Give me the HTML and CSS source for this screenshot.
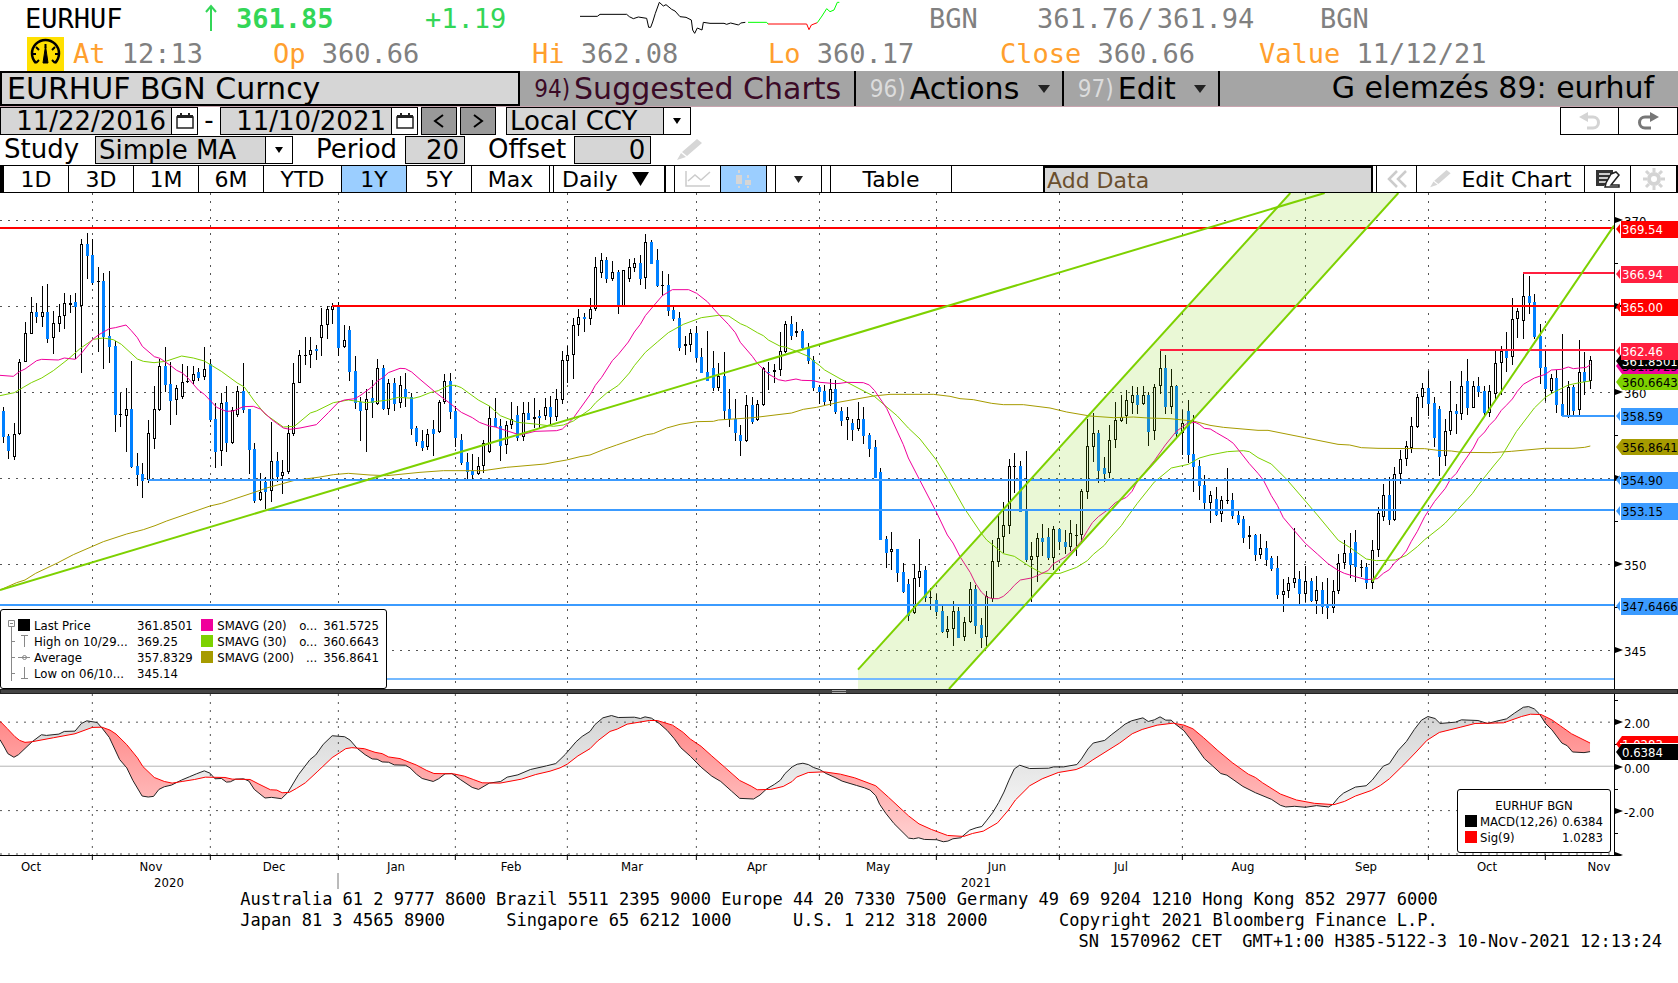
FILE: index.html
```html
<!DOCTYPE html>
<html lang="en">
<head>
  <meta charset="UTF-8" />
  <meta name="viewport" content="width=device-width, initial-scale=1.0"/>
  <title>EURHUF BGN Curncy</title>
  <link rel="stylesheet" href="styles.css">
</head>
<body>

  <!-- Quote lines -->
  <header class="quote">
    <div class="quote-row quote-top">
      <span class="ticker">EURHUF</span>
      <span class="up">
        <svg width="12" height="28" viewBox="0 0 12 28"><path d="M6 27V2M1 8l5-6 5 6" fill="none" stroke="#33d657" stroke-width="2"/></svg>
      </span>
      <span class="up last">361.85</span>
      <span class="up">+1.19</span>
      <span class="spark">
        <svg width="262" height="36" viewBox="0 0 786 108" fill="none" stroke-width="3">
          <path stroke="#000" d="M0 49H52L60 43H140L148 50L160 56L175 51L200 55L206 82H212L218 66L226 40L238 7L250 18L258 14L275 28L285 33L300 50L318 52L334 60L338 90L344 100L352 84L366 90L370 67L390 70H432L440 73L452 69L476 75L482 69L496 67"/>
          <path stroke="#0f0" d="M504 67H560L564 72"/>
          <path stroke="#f00" d="M564 72H680L687 89L694 75L712 68"/>
          <path stroke="#0f0" d="M712 68L726 48L740 26L750 35L762 30L772 7H778"/>
        </svg>
      </span>
      <span>BGN</span>
      <span>361.76<i class="slash">/</i>361.94</span>
      <span>BGN</span>
    </div>
    <div class="quote-row quote-bottom">
      <span class="gauge">
        <svg width="37" height="34" viewBox="0 0 37 34">
          <path d="M9 26A13.500 13.500 0 1 1 28 26" fill="none" stroke="#000" stroke-width="2.500"/>
          <path d="M18.500 7v4M5 17h4M28 17h4M9 10l3 3M28 10l-3 3M9 26l3-3M28 26l-3-3" stroke="#000" stroke-width="2" />
          <path d="M18.500 9l2.500 17h-5z" fill="#000" stroke="#000"/>
        </svg>
      </span>
      <span><b>At</b> 12:13</span>
      <span><b>Op</b> 360.66</span>
      <span><b>Hi</b> 362.08</span>
      <span><b>Lo</b> 360.17</span>
      <span><b>Close</b> 360.66</span>
      <span><b>Value</b> 11/12/21</span>
    </div>
  </header>

  <!-- Security / menu bar -->
  <nav class="menu-bar">
    <input type="text" class="security" aria-label="Security" value="EURHUF BGN Curncy" />
    <button class="menu-item suggested"><span class="num">94)</span>Suggested Charts</button>
    <button class="menu-item actions"><span class="num">96)</span>Actions <svg class="arrow" width="12" height="8" viewBox="0 0 12 8"><path d="M0 0h12L6 8z"/></svg></button>
    <button class="menu-item edit"><span class="num">97)</span>Edit <svg class="arrow" width="12" height="8" viewBox="0 0 12 8"><path d="M0 0h12L6 8z"/></svg></button>
    <h1>G elemzés 89: eurhuf</h1>
  </nav>

  <!-- Date range -->
  <div class="form-row">
    <input type="text" class="date" aria-label="Start date" value="11/22/2016" />
    <button class="calendar" aria-label="Pick start date"><svg width="18" height="18" viewBox="0 0 18 18"><path d="M1 5h16v11H1z" fill="none" stroke="#222" stroke-width="1.500"/><path d="M1 3h16v3H1zM4 1h2v3H4zM12 1h2v3h-2z" fill="#222"/></svg></button>
    <span class="dash">-</span>
    <input type="text" class="date" aria-label="End date" value="11/10/2021" />
    <button class="calendar" aria-label="Pick end date"><svg width="18" height="18" viewBox="0 0 18 18"><path d="M1 5h16v11H1z" fill="none" stroke="#222" stroke-width="1.500"/><path d="M1 3h16v3H1zM4 1h2v3H4zM12 1h2v3h-2z" fill="#222"/></svg></button>
    <button class="step" aria-label="Previous"><svg width="12" height="14" viewBox="0 0 12 14"><path d="M10 1L2 7l8 6" fill="none" stroke="#000" stroke-width="2"/></svg></button>
    <button class="step" aria-label="Next"><svg width="12" height="14" viewBox="0 0 12 14"><path d="M2 1l8 6-8 6" fill="none" stroke="#000" stroke-width="2"/></svg></button>
    <span class="drop currency">
      <select aria-label="Currency"><option>Local CCY</option></select>
      <span class="drop-arrow"><svg width="8" height="6" viewBox="0 0 8 6"><path d="M0 0h8L4 6z"/></svg></span>
    </span>
    <span class="history">
      <button aria-label="Undo"><svg width="24" height="20" viewBox="0 0 24 20"><path d="M8 6h7a5 5 0 0 1 0 11H9" fill="none" stroke="#d4d4d4" stroke-width="3"/><path d="M1 6l9-5v10z" fill="#d4d4d4"/></svg></button>
      <button aria-label="Redo"><svg width="24" height="20" viewBox="0 0 24 20"><path d="M16 6H9a5 5 0 0 0 0 11h6" fill="none" stroke="#777" stroke-width="3"/><path d="M23 6l-9-5v10z" fill="#777"/></svg></button>
    </span>
  </div>

  <!-- Study settings -->
  <div class="form-row">
    <label for="study" class="study-label">Study</label>
    <span class="drop study">
      <select id="study"><option>Simple MA</option></select>
      <span class="drop-arrow"><svg width="8" height="6" viewBox="0 0 8 6"><path d="M0 0h8L4 6z"/></svg></span>
    </span>
    <label for="period" class="field-label">Period</label>
    <input type="text" id="period" class="number period" value="20" />
    <label for="offset" class="field-label">Offset</label>
    <input type="text" id="offset" class="number offset" value="0" />
    <svg class="pencil" width="26" height="22" viewBox="0 0 26 22"><path d="M21 0l5 4-15 13-5-4zM5 14l5 4-9 3z" fill="#d6d6d6"/></svg>
  </div>

  <!-- Chart toolbar -->
  <div class="toolbar">
    <button>1D</button>
    <button>3D</button>
    <button>1M</button>
    <button>6M</button>
    <button class="wide">YTD</button>
    <button class="active">1Y</button>
    <button>5Y</button>
    <button class="wide">Max</button>
    <span class="gap narrow"></span>
    <span class="daily">
      <select aria-label="Periodicity"><option>Daily</option></select>
      <svg width="17" height="14" viewBox="0 0 17 14"><path d="M0 0h17L8.500 14z"/></svg>
    </span>
    <span class="gap"></span>
    <button class="icon" aria-label="Line chart"><svg width="26" height="18" viewBox="0 0 26 18" fill="none" stroke="#ccc" stroke-width="1.500"><path d="M1 1v15h24M3 11l7-6 6 5 9-8"/></svg></button>
    <button class="icon active" aria-label="Candle chart"><svg width="18" height="20" viewBox="0 0 18 20" fill="#d6d6d6"><path d="M3 1h2v3H3zM1 6h6v9H1zM3 17h2v2H3zM12 6h2v3h-2zM10 11h6v5h-6zM12 17h2v2h-2z"/></svg></button>
    <span class="gap"></span>
    <button class="icon" aria-label="More chart types"><svg width="9" height="7" viewBox="0 0 9 7"><path d="M0 0h9L4.500 7z" fill="#222"/></svg></button>
    <span class="gap"></span>
    <button class="table-btn">Table</button>
    <span class="blank"></span>
    <input type="text" class="add-data" aria-label="Add data" placeholder="Add Data" />
    <span class="gap narrow"></span>
    <button class="collapse" aria-label="Collapse"><svg width="20" height="18" viewBox="0 0 20 18" fill="none" stroke="#ccc" stroke-width="2.500"><path d="M10 1L2 9l8 8M19 1l-8 8 8 8"/></svg></button>
    <button class="edit-chart"><svg width="22" height="18" viewBox="0 0 26 22"><path d="M21 0l5 4-15 13-5-4zM5 14l5 4-9 3z" fill="#d6d6d6"/></svg>Edit Chart</button>
    <button class="icon" aria-label="Annotate"><svg width="24" height="18" viewBox="0 0 24 18"><path d="M0 0h17v4l-3 6-6 6H0z" fill="#333"/><path d="M3 4h11M3 8h9M3 12h7" stroke="#fff" stroke-width="1.500"/><path d="M15 4l5-2 3 3-8 10h8v2H9l1-4z" fill="#fff" stroke="#222" stroke-width="1.500"/></svg></button>
    <button class="icon" aria-label="Settings"><svg width="22" height="22" viewBox="0 0 22 22" fill="none" stroke="#d4d4d4"><circle cx="11" cy="11" r="5" stroke-width="4"/><path d="M11 0v4M11 18v4M0 11h4M18 11h4M3 3l3 3M16 16l3 3M3 19l3-3M16 6l3-3" stroke-width="3"/></svg></button>
  </div>

  <!-- Charts -->
  <main class="charts">
    <div class="pane">
      <svg id="price" class="price-plot" viewBox="0 9 4842 1488" preserveAspectRatio="none"></svg>
      <div class="legend price-legend">
        <svg class="tree" width="26" height="64" viewBox="0 0 26 64" fill="none" stroke="#888">
          <path d="M.500 2.500h6v6h-6zM2 5.500h3M3.500 9v54M4 23.500h3M4 39.500h3M10 39.500h12M4 55.500h3M13 17.500h7M16.500 18v11M13 60.500h7M16.500 49v11"/>
          <circle cx="16.500" cy="39.500" r="2"/>
          <path d="M10 1h12v12H10z" fill="#000" stroke="none"/>
        </svg>
        <table>
          <tr><td>Last Price</td><td>361.8501</td></tr>
          <tr><td>High on 10/29...</td><td>369.25</td></tr>
          <tr><td>Average</td><td>357.8329</td></tr>
          <tr><td>Low on 06/10...</td><td>345.14</td></tr>
        </table>
        <table class="averages">
          <tr><td><i class="swatch magenta"></i></td><td>SMAVG (20)</td><td class="more">o...</td><td>361.5725</td></tr>
          <tr><td><i class="swatch green"></i></td><td>SMAVG (30)</td><td class="more">o...</td><td>360.6643</td></tr>
          <tr><td><i class="swatch olive"></i></td><td>SMAVG (200)</td><td class="more">...</td><td>356.8641</td></tr>
        </table>
      </div>
    </div>
    <svg id="priceAxis" class="axis price-axis"></svg>

    <div class="splitter"><span class="grip"></span></div>

    <div class="pane">
      <svg id="macd" class="macd-plot" viewBox="0 42 4519 486" preserveAspectRatio="none"></svg>
      <div class="legend macd-legend">
        <table>
          <caption>EURHUF BGN</caption>
          <tr><td><i class="swatch black"></i></td><td>MACD(12,26)</td><td>0.6384</td></tr>
          <tr><td><i class="swatch red"></i></td><td>Sig(9)</td><td>1.0283</td></tr>
        </table>
      </div>
    </div>
    <svg id="macdAxis" class="axis macd-axis"></svg>
  </main>
  <svg id="months" class="months"></svg>

  <footer>
    <div class="phones">
      <pre>Australia 61 2 9777 8600 Brazil 5511 2395 9000 Europe 44 20 7330 7500 Germany 49 69 9204 1210 Hong Kong 852 2977 6000</pre>
      <pre>Japan 81 3 4565 8900      Singapore 65 6212 1000      U.S. 1 212 318 2000       Copyright 2021 Bloomberg Finance L.P.</pre>
    </div>
    <pre class="serial">SN 1570962 CET  GMT+1:00 H385-5122-3 10-Nov-2021 12:13:24</pre>
  </footer>

  <script src="chart.js"></script>
</body>
</html>
```

FILE: styles.css
```css
* {
  box-sizing: border-box;
}

body {
  margin: 0;
  background: #fff;
  color: #000;
  font-family: "DejaVu Sans", sans-serif;
  font-size: 26px;
}

button, input, select {
  font: inherit;
  color: inherit;
  margin: 0;
  padding: 0;
  border: 1px solid #000;
  border-radius: 0;
  background: #fff;
}

button {
  display: flex;
  align-items: center;
  justify-content: center;
  white-space: nowrap;
  cursor: pointer;
}

select {
  appearance: none;
}

svg {
  display: block;
  flex: none;
}

/* quote lines */
.quote {
  font-family: "DejaVu Sans Mono", monospace;
  font-size: 27px;
  color: #808080;
}

.quote-row {
  display: grid;
  align-items: center;
  white-space: nowrap;
  height: 36px;
}

.quote-top {
  grid-template-columns: 180fr 31fr 189fr 155fr 349fr 108fr 283fr 358fr;
  padding-left: 25px;
}

.quote-bottom {
  grid-template-columns: 46fr 200fr 259fr 236fr 232fr 259fr 419fr;
  padding-left: 27px;
  height: 35px;
}

.ticker {
  color: #000;
}

.up {
  color: #33d657;
}

.last {
  font-weight: bold;
}

.slash {
  padding: 0 3px;
  font-style: normal;
}

.quote-bottom b {
  color: #ff9f2e;
  font-weight: normal;
}

.gauge svg {
  background: #ffe000;
}

/* menu bar */
.menu-bar {
  display: flex;
  height: 36px;
  background: #a5a5a5;
  border-bottom: 1px solid #c9a5b0;
  font-size: 30px;
}

.security {
  width: 31%;
  padding-left: 5px;
  background: #d6d6d6;
  border-width: 2px;
}

.menu-item {
  justify-content: flex-start;
  padding: 0 12px 0 14px;
  background: none;
  border-width: 0 2px 0 0;
}

.suggested {
  width: 20%;
  color: #3b0a26;
}

.actions {
  width: 208px;
}

.edit {
  width: 156px;
}

.num {
  font-family: "Liberation Sans Narrow", "DejaVu Sans Condensed", sans-serif;
  font-size: 24px;
  color: #dcdcdc;
  padding-right: 4px;
}

.suggested .num {
  color: inherit;
}

.menu-item .arrow {
  margin-left: auto;
  fill: #222;
}

.menu-bar h1 {
  flex: 1;
  margin: 0;
  padding-right: 24px;
  text-align: right;
  font-size: 30px;
  font-weight: normal;
  line-height: 33px;
  white-space: nowrap;
}

/* date and study rows */
.form-row {
  display: flex;
  align-items: stretch;
  height: 28px;
  margin-bottom: 1px;
  line-height: 27px;
}

.date, .number, .drop select {
  background: #d6d6d6;
}

.date {
  width: 172px;
  padding-right: 5px;
  text-align: right;
}

.calendar {
  width: 26px;
  border-left: 0;
}

.dash {
  width: 22px;
  text-align: center;
}

.step {
  width: 36px;
  margin-left: 3px;
  background: #999;
}

.drop {
  display: flex;
}

.drop select {
  flex: 1;
  padding-left: 3px;
}

.drop-arrow {
  display: flex;
  align-items: center;
  justify-content: center;
  width: 27px;
  border: 1px solid #000;
  border-left: 0;
}

.currency {
  width: 185px;
  margin-left: 10px;
}

.history {
  display: flex;
  margin-left: auto;
}

.history button {
  width: 59px;
}

.history button + button {
  border-left: 0;
}

.study-label {
  width: 95px;
  padding-left: 4px;
}

.study {
  width: 198px;
}

.field-label {
  padding: 0 8px 0 23px;
}

.number {
  width: 60px;
  padding-right: 5px;
  text-align: right;
}

.offset {
  width: 77px;
}

.pencil {
  margin: 3px 25px;
}

/* chart toolbar */
.toolbar {
  display: flex;
  height: 28px;
  border: 1px solid #000;
  border-left-width: 4px;
  font-size: 22px;
}

.toolbar button {
  width: 65px;
  border-width: 0 1px 0 0;
}

.toolbar .wide {
  width: 78px;
}

.toolbar .active {
  background: #9bceff;
}

.toolbar .icon {
  width: 46px;
}

.gap {
  width: 9px;
  border-right: 1px solid #000;
}

.gap.narrow {
  width: 4px;
}

.daily {
  display: flex;
  align-items: center;
  width: 112px;
  padding-left: 8px;
  border-right: 2px solid #000;
}

.daily select {
  width: 70px;
  border: 0;
}

.toolbar .table-btn {
  width: 121px;
}

.blank {
  width: 91px;
}

.add-data {
  flex: 1;
  min-width: 100px;
  padding-left: 2px;
  background: #d6d6d6;
  border-width: 2px 2px 0;
}

.add-data::placeholder {
  color: #6b4f2d;
  opacity: 1;
}

.toolbar .collapse {
  width: 40px;
}

.toolbar .edit-chart {
  width: 168px;
  gap: 10px;
}

/* charts */
.charts {
  display: grid;
  grid-template-columns: 1fr 63px;
}

.charts, .months {
  font-family: "DejaVu Sans Condensed", "DejaVu Sans", sans-serif;
  font-size: 13px;
}

.pane {
  position: relative;
  border-right: 1px solid #000;
}

.price-plot, .macd-plot {
  width: 100%;
}

.price-plot, .price-axis {
  height: 496px;
}

.macd-plot, .macd-axis {
  height: 162px;
}

.axis {
  width: 100%;
}

.macd-plot {
  border-bottom: 1px solid #000;
}

.price-plot *, .macd-plot * {
  vector-effect: non-scaling-stroke;
}

.grid {
  stroke: #555;
  stroke-dasharray: 2 6;
  shape-rendering: crispEdges;
}

.candle {
  shape-rendering: crispEdges;
}

.sma {
  fill: none;
  stroke-width: 1;
}

.level {
  stroke-width: 2;
  shape-rendering: crispEdges;
}

.trend {
  stroke: #7dd100;
  stroke-width: 2;
}

.splitter {
  grid-column: 1 / -1;
  display: flex;
  justify-content: center;
  align-items: center;
  height: 5px;
  background: #444;
  border: 1px solid #222;
}

.grip {
  width: 14px;
  height: 3px;
  border: 1px solid #aaa;
  border-width: 1px 0;
}

.legend {
  position: absolute;
  display: flex;
  align-items: flex-start;
  background: #fff;
  border: 1px solid #000;
  border-radius: 3px;
  line-height: 16px;
  white-space: nowrap;
}

.legend table {
  border-collapse: collapse;
}

.legend td {
  padding: 0;
  height: 16px;
  vertical-align: top;
}

.price-legend {
  left: 0;
  bottom: 0;
  width: 387px;
  height: 80px;
  padding: 8px 7px;
}

.price-legend > table td:first-child {
  width: 103px;
}

.averages {
  margin-left: auto;
}

.price-legend > .averages td:first-child {
  width: 16px;
}

.averages td:nth-child(2) {
  width: 78px;
}

.averages .more {
  width: 28px;
  padding-right: 6px;
  text-align: right;
}

.macd-legend {
  right: 3px;
  bottom: 3px;
  width: 154px;
  height: 64px;
  padding: 8px 7px;
}

.macd-legend table {
  width: 100%;
}

.macd-legend td:first-child {
  width: 15px;
}

.macd-legend td:last-child {
  text-align: right;
}

.swatch {
  display: block;
  width: 12px;
  height: 12px;
  margin-top: 1px;
}

.magenta {
  background: #f0009b;
}

.green {
  background: #7dd100;
}

.olive {
  background: #a69b00;
}

.black {
  background: #000;
}

.red {
  background: #f00;
}

.months {
  width: 100%;
  height: 33px;
}

/* footer */
footer {
  font-size: 17px;
  line-height: 21px;
}

footer pre {
  margin: 0;
  font-family: "DejaVu Sans Mono", monospace;
}

.phones {
  width: max-content;
  margin: 0 auto;
}

.serial {
  padding-right: 16px;
  text-align: right;
}
```

FILE: chart.js
```javascript
const NS = "http://www.w3.org/2000/svg";

function draw(parent, tag, attrs, text) {
  const el = document.createElementNS(NS, tag);
  for (const key in attrs) el.setAttribute(key, attrs[key]);
  if (text !== undefined) el.textContent = text;
  parent.appendChild(el);
  return el;
}

// candles: x, direction (d = down, u = up, n = no change), high, body top, body bottom, low
// four blocks of the year, each 1260 units wide apart from the last
const candles = [
  [0, `10 d 652 664 740 758,25 d 732 738 782 806,43 u 700 733 800 811,58 u 507 517 733 734,76 u 396 430 517 517,94 u 321 367 433 433,109 d 339 367 381 398,127 u 288 367 382 411,142 d 282 366 446 458,160 u 363 400 445 491,178 u 342 379 403 425,193 u 309 339 379 418,211 u 315 340 346 369,226 d 309 336 350 508,244 u 147 162 349 548,262 d 129 162 198 266,277 d 147 195 278 284,295 n 231 273 276 485,310 d 249 273 440 536,328 d 243 438 470 518,346 d 452 468 675 726,361 n 608 672 674 711,379 u 594 658 679 785,394 d 513 657 830 833,412 d 789 828 854 887,427 d 819 852 872 923,445 u 690 730 871 880,463 u 588 657 748 776,478 u 507 529 661 662,496 d 471 528 584 605,511 d 516 582 632 705,529 u 585 595 631 674,547 u 522 577 622 626,562 n 527 573 577 580,580 u 528 552 573 581,595 d 534 547 563 572,613 u 471 538 562 570,631 d 507 522 690 695,646 d 640 687 786 833,664 u 609 640 784 827,679 d 588 636 759 786,697 u 651 661 758 761,712 u 588 603 676 680,730 d 519 603 660 669,748 d 657 657 779 852,763 d 758 777 933 938,781 u 849 906 931 932,796 d 860 876 906 958,814 u 696 814 904 935,832 d 786 813 860 875,847 u 810 847 859 911,865 u 705 730 847 853,880 u 519 580 733 737,898 u 480 496 580 580,916 n 441 495 497 524,931 u 441 481 496 533,949 d 465 477 483 510,964 u 354 406 445 497,982 u 348 358 406 446,997 u 339 348 361 402,1015 d 336 349 473 497,1033 u 405 451 472 473,1048 d 408 420 545 572,1066 d 498 543 639 658,1081 d 621 636 662 753,1099 u 597 626 661 785,1117 d 570 624 639 684,1132 u 507 535 643 645,1150 d 525 534 657 659,1165 u 568 580 656 675,1183 d 564 579 641 662,1201 u 558 586 639 654,1216 d 549 597 622 650,1234 d 609 621 716 735,1249 d 708 714 755 768`],
  [1260, `7 d 720 753 773 782,22 u 717 733 772 779,40 d 690 717 732 797,58 u 631 637 727 728,73 u 552 574 637 643,91 d 549 573 665 686,106 d 648 663 744 770,124 d 732 750 819 825,142 d 789 816 845 867,157 d 792 842 854 868,175 u 801 829 853 854,190 u 750 760 829 848,208 u 649 685 785 789,226 d 624 684 711 712,241 d 687 708 767 812,259 u 693 706 766 791,274 u 636 688 706 716,292 d 648 675 744 753,310 u 636 670 740 752,325 d 636 669 690 691,343 u 624 682 688 714,358 d 660 678 683 714,376 u 624 652 678 690,391 d 618 651 681 705,409 u 597 628 680 692,427 u 483 511 629 641,442 u 467 496 512 578,460 u 384 406 496 567,475 u 357 382 406 437,493 d 369 381 387 426,511 u 324 358 386 405,526 u 201 232 358 362,544 u 189 211 250 263,559 d 201 210 267 278,577 u 213 247 266 272,595 d 240 246 347 372,610 u 241 241 349 352,628 u 207 232 268 275,643 u 204 220 233 245,661 d 195 219 267 285,676 u 132 157 265 296,694 d 150 156 222 222,712 d 177 210 288 290,727 n 243 285 287 317,745 d 252 285 363 377,760 d 348 360 387 393,778 d 366 384 474 483,796 u 438 463 469 494,811 u 417 430 464 486,829 d 408 429 504 515,844 d 474 501 549 549,862 d 423 546 572 572,880 d 483 534 594 602,895 u 519 559 593 602,913 d 486 558 662 687,928 d 597 657 687 710,946 d 627 687 729 752,961 d 705 735 752 797,979 u 615 646 752 756,997 d 621 645 695 701,1012 u 630 643 691 692,1030 u 531 535 644 648,1045 d 516 545 549 600,1063 u 522 541 547 578,1081 u 426 484 541 557,1096 u 393 403 487 489,1114 d 378 402 438 449,1129 u 396 424 430 440,1147 d 417 423 474 476,1165 d 459 473 513 521,1180 d 498 510 594 602,1198 d 585 591 605 642,1213 d 585 603 636 645,1231 u 567 598 634 648,1246 d 569 597 665 672`],
  [2520, `4 d 651 663 693 707,22 u 651 680 691 749,37 d 687 699 719 752,55 u 636 688 718 722,70 d 651 687 738 761,88 d 730 735 777 800,106 d 750 771 864 864,121 d 834 846 1049 1050,139 d 1038 1047 1088 1133,154 u 1026 1078 1087 1139,172 d 1077 1077 1149 1176,190 d 1119 1146 1206 1209,205 d 1167 1182 1277 1292,223 u 1122 1165 1270 1271,238 u 1047 1144 1165 1190,256 d 1128 1140 1223 1235,271 n 1195 1221 1223 1259,289 d 1212 1230 1266 1277,307 d 1248 1263 1326 1329,322 u 1278 1316 1325 1345,340 u 1233 1264 1316 1367,355 d 1251 1263 1343 1345,373 u 1281 1295 1340 1352,391 u 1176 1198 1295 1299,406 d 1185 1197 1307 1331,424 d 1284 1305 1343 1373,439 u 1203 1217 1342 1368,457 u 1050 1114 1226 1235,475 u 975 1043 1115 1130,490 u 936 1006 1042 1090,508 u 807 829 1007 1031,523 n 789 828 830 909,541 d 813 828 966 966,559 d 783 960 1110 1115,574 u 1056 1099 1109 1235,592 u 1029 1045 1100 1176,607 d 1002 1044 1056 1097,625 d 1014 1041 1104 1109,640 u 1008 1018 1103 1140,658 d 1014 1017 1056 1080,676 d 1020 1056 1071 1091,691 u 990 1030 1070 1083,709 n 1002 1035 1037 1098,724 u 897 903 1036 1059,742 u 687 769 905 926,760 u 669 730 770 815,775 d 720 729 843 878,793 d 801 834 851 875,808 u 705 751 850 865,826 u 636 691 751 773,844 u 615 680 692 695,859 u 600 631 679 701,877 u 588 616 638 671,892 d 591 615 645 671,910 u 588 616 643 644,925 d 606 615 726 768,943 u 582 592 724 750,961 u 481 535 587 611,976 d 495 534 651 672,994 u 537 589 650 671,1009 d 585 588 732 740,1027 u 660 700 730 795,1045 d 630 663 795 819,1060 d 675 792 831 906,1078 d 810 828 888 930,1093 d 855 885 939 956,1111 u 903 916 938 998,1129 d 891 927 975 977,1144 u 918 931 973 995,1162 n 834 930 932 942,1177 d 909 930 978 986,1195 d 963 975 999 1004,1210 d 978 987 1044 1058,1228 u 1008 1036 1042 1077,1246 d 1032 1035 1095 1112`],
  [3774, `7 u 1032 1075 1094 1106,25 d 1053 1074 1110 1127,40 d 1099 1104 1137 1142,58 d 1098 1134 1215 1226,76 u 1167 1204 1214 1266,91 u 1161 1180 1204 1223,109 u 1014 1165 1180 1193,124 d 1143 1167 1212 1242,142 u 1128 1174 1211 1236,160 d 1164 1173 1233 1236,175 u 1158 1201 1232 1271,193 d 1176 1200 1250 1271,208 d 1164 1248 1253 1286,226 u 1170 1204 1253 1268,241 u 1092 1120 1204 1211,259 u 1050 1090 1120 1136,277 d 1029 1089 1125 1163,292 d 1020 1056 1131 1175,310 n 1110 1131 1133 1160,325 d 1119 1131 1179 1196,343 u 1050 1081 1178 1196,361 u 951 970 1081 1101,376 u 882 916 982 992,394 d 861 915 990 1004,409 u 831 853 989 992,427 u 780 808 853 881,445 u 753 769 808 827,460 u 681 709 775 790,478 u 612 622 710 713,493 u 579 595 622 653,511 d 543 594 641 678,529 d 621 639 743 770,544 d 648 657 800 857,562 u 687 724 799 827,577 u 573 664 724 735,595 d 642 663 671 731,610 u 543 589 671 690,628 d 507 573 654 674,646 u 573 589 653 654,661 d 561 588 605 620,679 d 588 603 668 677,694 u 585 604 668 680,712 u 483 520 613 627,730 u 468 484 520 614,745 d 426 480 503 545,763 u 324 388 502 524,778 u 354 364 388 443,796 u 249 319 394 446,814 d 258 318 339 371,829 d 312 336 440 446,847 d 402 437 533 582,862 d 480 531 597 633,880 u 552 565 604 611,895 d 540 564 645 668,913 d 432 642 677 678,931 u 573 592 677 683,946 d 585 591 662 677,964 u 450 547 661 675,979 d 486 546 575 615,997 u 498 511 574 596`]
];

const sma20 = [
  [0, "0,556 40,559 58,545 75,537 110,512 125,508 175,510 193,504 226,508 244,490 277,449 295,435 328,416 346,413 378,405 394,422 412,443 427,469 463,500 480,505 511,526 530,541 547,549 562,562 595,600 613,613 650,652 679,664 700,663 730,650 760,649 781,657 814,688 850,714 870,718 900,714 949,704 985,668 1015,637 1033,630 1065,626 1083,615 1117,590 1132,573 1150,562 1165,548 1200,535 1216,536 1235,546"],
  [1260, "0,568 50,610 90,640 124,667 157,683 178,697 208,708 226,711 259,722 300,735 345,724 410,722 427,717 442,703 460,684 478,659 511,613 526,586 545,562 577,512 595,493 625,456 643,426 661,403 676,377 703,345 727,317 757,299 806,299 830,310 862,335 895,372 925,403 946,428 961,457 997,499 1012,520 1045,552 1075,569 1096,573 1128,567 1145,571 1180,572 1200,577 1246,581"],
  [2520, "0,580 20,577 70,578 88,585 104,602 121,627 140,655 190,764 205,804 238,868 289,966 322,1035 339,1059 360,1100 391,1148 406,1179 424,1206 440,1221 457,1226 475,1226 490,1219 508,1203 523,1186 541,1170 574,1164 592,1157 625,1141 640,1121 676,1101 709,1071 724,1053 742,1022 757,998 775,980 808,956 826,938 859,922 876,904 892,874 943,812 976,765 1009,724 1042,700 1065,697 1078,703 1093,715 1111,717 1129,728 1162,747 1180,760 1228,821"],
  [3774, "0,850 16,870 40,917 58,946 76,983 109,1022 142,1060 178,1092 210,1121 240,1141 259,1150 292,1160 325,1169 358,1166 376,1150 394,1139 409,1119 427,1104 445,1083 460,1054 478,1024 500,980 530,934 562,895 577,868 595,850 610,826 646,774 661,745 680,726 694,706 712,688 730,661 745,646 763,627 778,604 796,583 829,564 862,553 880,540 910,538 931,531 946,536 985,532 997,524"]
];

const sma30 = [
  [0, "0,617 43,608 70,592 94,578 125,564 160,542 205,507 240,476 280,448 310,444 340,449 364,463 412,507 430,514 462,518 497,514 545,498 580,504 613,513 664,544 712,579 733,591 763,633 795,672 850,711 883,709 931,669 949,663 1000,638 1045,630 1100,638 1165,630 1195,622 1240,625"],
  [1260, "0,620 30,608 55,602 75,591 91,586 106,586 124,593 175,630 208,648 241,677 292,697 345,702 400,709 430,705 460,693 510,658 527,638 560,609 595,586 628,549 643,527 676,487 712,456 745,428 790,403 844,383 895,376 926,378 961,401 980,409 1012,428 1030,437 1045,450 1081,469 1096,471 1129,484 1165,499 1180,513 1198,526 1214,540"],
  [2520, "0,566 104,620 172,678 205,714 240,747 289,810 322,865 373,955 424,1030 440,1050 490,1091 523,1099 570,1130 605,1149 640,1151 660,1150 710,1132 742,1112 760,1093 793,1066 808,1047 844,1007 859,985 892,940 943,876 994,834 1045,823 1078,804 1110,795 1162,785 1210,782 1228,785"],
  [3774, "0,803 40,822 85,867 142,933 178,975 241,1051 275,1072 325,1107 355,1112 412,1110 445,1096 478,1070 500,1049 547,1012 562,999 595,963 643,911 661,885 709,825 730,800 775,725 829,654 862,622 885,608 931,585 970,577 997,573"]
];

const sma200 = [
  [0, "0,1200 50,1178 75,1170 107,1150 172,1119 220,1094 310,1055 380,1032 430,1019 465,1007 500,993 630,948 665,940 700,928 760,908 800,894 880,872 960,861 1000,854 1045,850 1110,855 1160,857"],
  [1260, "0,847 70,842 190,842 260,832 375,822 405,816 440,810 480,800 510,795 550,779 590,765 680,734 700,731 740,714 780,703 830,695 880,694 895,690 1000,683 1065,675 1115,669 1150,658 1190,652"],
  [2520, "0,636 100,618 150,613 280,613 330,619 360,626 400,629 455,640 490,644 550,644 630,654 680,666 750,678 820,683 880,681 925,684 990,686 1060,693 1110,706 1150,712"],
  [3774, "0,721 30,721 140,743 240,763 275,765 310,773 360,775 500,776 540,781 580,783 610,787 700,788 760,784 860,775 945,775 980,772 997,768"]
];

function join(blocks) {
  return blocks.map(([dx, pts]) => pts.split(" ").map(p => {
    const [x, y] = p.split(",").map(Number);
    return (x + dx) + "," + y;
  }).join(" ")).join(" ");
}

// Price pane
const price = document.getElementById("price");
[91, 349, 607, 865, 1123, 1381].forEach(y => draw(price, "line", { class: "grid", x1: 0, x2: 4842, y1: y, y2: y }));
const monthStarts = [277, 631, 1015, 1366, 1702, 2089, 2458, 2809, 3178, 3547, 3916, 4285, 4636];
monthStarts.forEach(x => draw(price, "line", { class: "grid", x1: x, x2: x, y1: 9, y2: 1497 }));

candles.forEach(([dx, rows]) => rows.split(",").forEach(row => {
  const p = row.split(" ");
  const mid = Math.floor((Number(p[0]) + dx) / 3) * 3 + 1.5;
  const [hi, top, bottom, lo] = p.slice(2).map(v => Math.round(v / 3) * 3);
  draw(price, "line", { class: "candle", x1: mid, x2: mid, y1: hi, y2: Math.max(lo, hi + 3), stroke: "#000" });
  if (p[1] === "d") {
    draw(price, "rect", { class: "candle", x: mid - 4.5, y: top, width: 9, height: Math.max(bottom - top, 3), fill: "#0080ff" });
  } else if (p[1] === "u") {
    draw(price, "rect", { class: "candle", x: mid - 3, y: top + 1.5, width: 6, height: Math.max(bottom - top - 3, 3), fill: "#fff", stroke: "#000" });
  } else {
    draw(price, "rect", { class: "candle", x: mid - 4.5, y: top, width: 9, height: 3, fill: "#000" });
  }
}));

draw(price, "polyline", { class: "sma", points: join(sma200), stroke: "#a69b00" });
draw(price, "polyline", { class: "sma", points: join(sma30), stroke: "#7dd100" });
draw(price, "polyline", { class: "sma", points: join(sma20), stroke: "#f0009b" });

// channel
draw(price, "polygon", { points: "2574,1439 3871,9 4195,9 2847,1497 2574,1497", fill: "#7dd100", "fill-opacity": 0.16 });

[
  [0, 114, "#ff0000"], [995, 348, "#ff0000"], [3480, 480, "#ff1f3f"], [4570, 249, "#ff1f3f"],
  [445, 870, "#3b9bff"], [805, 960, "#3b9bff"], [0, 1245, "#3b9bff"], [4687, 678, "#3b9bff"], [0, 1467, "#74b9ff"]
].forEach(([x, y, color]) => draw(price, "line", { class: "level", x1: x, x2: 4842, y1: y, y2: y, stroke: color }));

[
  [0, 1200, 3974, 9], [2574, 1439, 3871, 9], [2847, 1497, 4195, 9], [4117, 1174, 4842, 107]
].forEach(([x1, y1, x2, y2]) => draw(price, "line", { class: "trend", x1, y1, x2, y2 }));

// Price axis
const priceAxis = document.getElementById("priceAxis");
const axisY = v => Math.round((v - 9) / 3);

[[91, "370"], [607, "360"], [1123, "350"], [1381, "345"], [349], [865]].forEach(([v, label]) => {
  const y = axisY(v);
  draw(priceAxis, "polygon", { points: `0,${y - 3} 8,${y} 0,${y + 3}` });
  if (label) draw(priceAxis, "text", { x: 9, y: y + 6 }, label);
});
[220, 736, 994, 1252].forEach(v => draw(priceAxis, "rect", { x: 0, y: axisY(v), width: 3, height: 1 }));

function tag(axis, y, label, fill, ink, solid) {
  if (solid) {
    draw(axis, "polygon", { points: `1,${y} 7,${y - 8} 64,${y - 8} 64,${y + 8} 7,${y + 8}`, fill });
  } else {
    draw(axis, "polygon", { points: `1,${y} 5,${y - 5} 5,${y + 5}`, fill });
    draw(axis, "rect", { x: 6, y: y - 8, width: 57, height: 17, fill });
  }
  draw(axis, "text", { x: 7, y: y + 5, fill: ink }, label);
}

[
  [528, "361.5725", "#f0009b", "#000", true],
  [514, "361.8501", "#000", "#fff", true],
  [576, "360.6643", "#7dd100", "#000", true],
  [770, "356.8641", "#a69b00", "#000", true],
  [116, "369.54", "#ff0000", "#fff"],
  [251, "366.94", "#ff1f3f", "#fff"],
  [350, "365.00", "#ff0000", "#fff"],
  [482, "362.46", "#ff1f3f", "#fff"],
  [679, "358.59", "#3b9bff", "#000"],
  [871, "354.90", "#3b9bff", "#000"],
  [962, "353.15", "#3b9bff", "#000"],
  [1247, "347.6466", "#3b9bff", "#000"]
].forEach(([v, label, fill, ink, solid]) => tag(priceAxis, axisY(v), label, fill, ink, solid));

// MACD pane
const macdLine = join([
  [0, "0,180 12,202 22,222 39,233 52,225 90,186 116,165 130,167 165,163 180,155 210,154 228,131 243,123 272,128 285,144 306,173 335,240 355,265 372,303 398,350 415,353 430,351 445,330 460,322 480,317 508,302 530,292 550,283 572,274 588,281 602,298 620,297 634,308 645,307 660,299 682,298 697,305 712,330 742,356 760,354 788,358 806,339 836,285 868,240 884,226 905,194 930,168 965,171 980,181 1000,206 1022,225 1042,238 1056,239 1070,247 1088,248 1104,256 1135,257 1148,265 1166,284 1182,297 1213,306 1228,298 1246,283 1265,282 1290,301 1322,324 1340,330 1370,311 1402,306 1420,293 1450,286 1485,270 1530,259 1556,252"],
  [1568, "0,240 15,224 45,186 62,170 84,155 98,134 120,114 144,107 163,113 208,112 225,116 238,111 256,115 278,131 300,152 320,177 338,204 365,230 395,263 425,290 450,306 480,335 503,357 542,359 560,347 578,329 600,315 617,302 630,282 650,262 664,254 680,251 695,255 710,264 727,270 745,282 770,294 790,305 830,318 852,325 868,332 884,349 895,375 912,402 935,433 976,477 990,479 1004,476 1020,481 1055,482 1073,488 1086,486 1100,479 1122,476 1147,453 1165,446 1181,442 1195,423 1212,399 1228,370 1243,338 1257,302 1272,268 1287,257 1315,267 1368,266 1382,262 1410,262 1447,255 1460,238 1478,208 1493,190 1525,182 1545,164"],
  [3130, "5,146 20,133 38,123 70,114 85,125 102,120 118,111 134,121 149,121 160,132 185,153 208,185 242,237 265,259 288,282 305,287 325,302 350,321 385,340 430,360 455,378 470,383 495,381 525,384 556,379 590,383 602,375 618,354 632,341 665,323 695,319 712,302 730,277 743,260 760,252 785,212 808,185 830,149 850,121 868,110 888,116 902,131 945,127 962,120 1008,122 1035,131 1060,124 1088,117 1110,100 1135,82 1150,80 1166,87 1180,102 1198,132 1215,150 1243,190 1258,198 1273,217 1305,219 1322,216"]
]);

const signalLine = join([
  [0, "0,124 20,146 42,171 55,182 70,188 90,186 150,174 210,162 258,143 285,142 308,151 325,163 355,195 385,235 400,261 432,294 460,306 482,311 510,306 545,300 575,293 630,294 650,299 700,300 725,314 757,331 775,332 790,340 810,339 830,327 855,310 890,275 930,234 950,220 968,207 985,204 1020,207 1050,218 1070,222 1088,232 1120,237 1165,256 1195,273 1215,282 1270,283 1300,290 1325,300 1350,310 1400,311 1460,299 1500,285 1540,275"],
  [1568, "0,265 20,254 50,229 84,207 105,184 140,155 160,148 188,133 250,122 272,122 315,136 345,158 365,178 395,200 425,229 460,262 503,303 535,320 552,331 590,330 625,321 650,306 662,293 695,279 740,277 785,284 825,295 884,319 920,354 976,410 1005,434 1040,451 1085,469 1130,472 1155,463 1185,456 1225,431 1255,393 1275,362 1315,319 1350,298 1395,279 1445,270 1465,261 1490,242"],
  [3130, "5,190 40,162 68,149 110,136 155,130 185,136 210,147 240,174 280,213 320,249 365,284 385,294 405,310 455,344 500,362 550,372 605,376 635,366 665,350 710,333 735,318 760,298 800,256 835,217 865,182 900,158 960,142 1000,131 1080,129 1130,110 1155,103 1185,104 1215,120 1240,139 1270,162 1322,190"]
]);

const macd = document.getElementById("macd");
const defs = draw(macd, "defs", {});
[["aboveFill", "#d2d2d2", "#ffffff"], ["belowFill", "#ff8080", "#ffd2d2"]].forEach(([id, from, to]) => {
  const g = draw(defs, "linearGradient", { id, gradientUnits: "userSpaceOnUse", x1: 0, x2: 0, y1: 80, y2: 490 });
  draw(g, "stop", { offset: 0, "stop-color": from });
  draw(g, "stop", { offset: 1, "stop-color": to });
});
draw(draw(defs, "clipPath", { id: "above" }), "polygon", { points: `${signalLine} 4452,0 0,0` });
draw(draw(defs, "clipPath", { id: "below" }), "polygon", { points: `${signalLine} 4452,600 0,600` });

draw(macd, "line", { x1: 0, x2: 4519, y1: 260, y2: 260, stroke: "#b4b4b4" });
const between = macdLine + " " + signalLine.split(" ").reverse().join(" ");
draw(macd, "polygon", { points: between, fill: "url(#aboveFill)", "clip-path": "url(#above)" });
draw(macd, "polygon", { points: between, fill: "url(#belowFill)", "clip-path": "url(#below)" });
[127, 394, 525].forEach(y => draw(macd, "line", { class: "grid", x1: 0, x2: 4519, y1: y, y2: y }));
monthStarts.forEach(x => draw(macd, "line", { class: "grid", x1: x * 14 / 15, x2: x * 14 / 15, y1: 42, y2: 528 }));
draw(macd, "polyline", { points: macdLine, fill: "none", stroke: "#222" });
draw(macd, "polyline", { points: signalLine, fill: "none", stroke: "#f00" });

const macdAxis = document.getElementById("macdAxis");
[[28, "2.00"], [73, "0.00"], [117, "-2.00"], [161]].forEach(([y, label]) => {
  draw(macdAxis, "polygon", { points: `0,${y - 3} 8,${y} 0,${y + 3}` });
  if (label) draw(macdAxis, "text", { x: 9, y: y + 6 }, label);
});
[6, 50, 95, 139].forEach(y => draw(macdAxis, "rect", { x: 0, y, width: 3, height: 1 }));
tag(macdAxis, 50, "1.0283", "#f00", "#fff", true);
draw(macdAxis, "rect", { x: 5, y: 49, width: 59, height: 1, fill: "#fff" });
tag(macdAxis, 58, "0.6384", "#000", "#fff", true);

// Month labels, placed as a share of the full width
const months = document.getElementById("months");
const share = x => (x / 1678 * 100) + "%";
[[31, "Oct"], [151, "Nov"], [274, "Dec"], [396, "Jan"], [511, "Feb"], [632, "Mar"], [757, "Apr"], [878, "May"], [997, "Jun"], [1121, "Jul"], [1243, "Aug"], [1366, "Sep"], [1487, "Oct"], [1599, "Nov"]]
  .forEach(([x, name]) => draw(months, "text", { x: share(x), y: 15, "text-anchor": "middle" }, name));
[[169, "2020"], [976, "2021"]].forEach(([x, year]) => draw(months, "text", { x: share(x), y: 31, "text-anchor": "middle" }, year));
monthStarts.forEach(x => draw(months, "line", { x1: share(x / 3), x2: share(x / 3), y1: 0, y2: 4, stroke: "#000" }));
draw(months, "line", { x1: share(338), x2: share(338), y1: 17, y2: 34, stroke: "#777" });
```
